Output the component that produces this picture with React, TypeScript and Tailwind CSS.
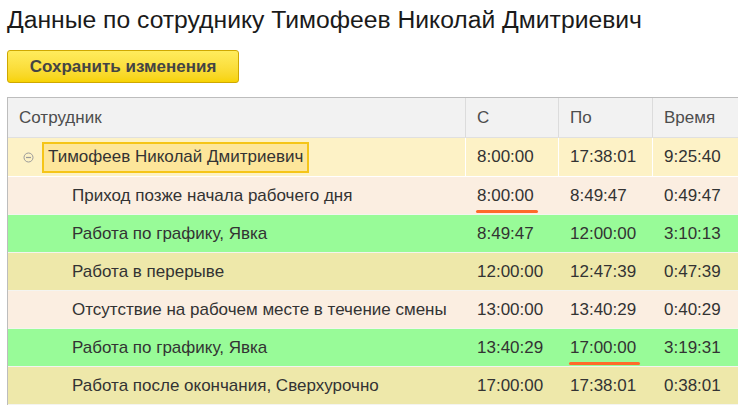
import React from 'react';

type Row = { name: string; from: string; to: string; time: string; bg: string; markFrom?: boolean; markTo?: boolean };

const rows: Row[] = [
  { name: 'Приход позже начала рабочего дня', from: '8:00:00', to: '8:49:47', time: '0:49:47', bg: 'bg-[#fbeee1]', markFrom: true },
  { name: 'Работа по графику, Явка', from: '8:49:47', to: '12:00:00', time: '3:10:13', bg: 'bg-[#98fb98]' },
  { name: 'Работа в перерыве', from: '12:00:00', to: '12:47:39', time: '0:47:39', bg: 'bg-[#eee8aa]' },
  { name: 'Отсутствие на рабочем месте в течение смены', from: '13:00:00', to: '13:40:29', time: '0:40:29', bg: 'bg-[#fbeee1]' },
  { name: 'Работа по графику, Явка', from: '13:40:29', to: '17:00:00', time: '3:19:31', bg: 'bg-[#98fb98]', markTo: true },
  { name: 'Работа после окончания, Сверхурочно', from: '17:00:00', to: '17:38:01', time: '0:38:01', bg: 'bg-[#eee8aa]' },
];

const Marked = ({ text, on }: { text: string; on?: boolean }) => (
  <span className="relative">
    {text}
    {on && <span className="absolute -left-[1px] -right-[4px] -bottom-[5px] h-[3px] rounded-full bg-[#ff6a2a]" />}
  </span>
);

const App = () => {
  return (
    <div className="w-[738px] h-[410px] overflow-hidden bg-white font-['Liberation_Sans',Arial,sans-serif]">
      <h1 className="pl-[7px] pt-[5px] text-[24.7px] leading-[30px] text-[#1a1a1a]">
        Данные по сотруднику Тимофеев Николай Дмитриевич
      </h1>
      <div className="pl-[7px] mt-[15px]">
        <button className="w-[232px] h-[33px] rounded-[3px] border border-[#cfa800] bg-gradient-to-b from-[#ffec5c] to-[#f7d300] text-[17px] font-bold text-[#444]">
          Сохранить изменения
        </button>
      </div>
      <div className="ml-[7px] mt-[14px] w-[740px] border-l border-t border-[#bdbdbd] text-[17px] text-[#333]">
        <div className="grid grid-cols-[458px_93px_94px_1fr] h-[40px] bg-[#f2f2f2] text-[#4d4d4d] border-b border-[#e0e0e0]">
          <div className="flex items-center pl-[11px] border-r border-[#dcdcdc]">Сотрудник</div>
          <div className="flex items-center pl-[11px] border-r border-[#dcdcdc]">С</div>
          <div className="flex items-center pl-[11px] border-r border-[#dcdcdc]">По</div>
          <div className="flex items-center pl-[11px]">Время</div>
        </div>
        <div className="grid grid-cols-[458px_93px_94px_1fr] h-[39px] bg-[#fdf2c6] border-b border-white">
          <div className="flex items-center border-r border-white">
            <svg width="11" height="11" viewBox="0 0 11 11" className="ml-[15px] mr-[8px]">
              <circle cx="5.5" cy="5.5" r="4.5" fill="none" stroke="#9a9a9a" strokeWidth="1" />
              <line x1="3" y1="5.5" x2="8" y2="5.5" stroke="#9a9a9a" strokeWidth="1.2" />
            </svg>
            <span className="h-[31px] flex items-center px-[4px] border-2 border-[#f5c518] bg-[#fde69a]">
              Тимофеев Николай Дмитриевич
            </span>
          </div>
          <div className="flex items-center pl-[11px] border-r border-white">8:00:00</div>
          <div className="flex items-center pl-[11px] border-r border-white">17:38:01</div>
          <div className="flex items-center pl-[11px]">9:25:40</div>
        </div>
        {rows.map((r, i) => (
          <div key={i} className={`grid grid-cols-[458px_93px_94px_1fr] h-[38px] border-b border-[#f4f4f0] ${r.bg}`}>
            <div className="flex items-center pl-[64px]">{r.name}</div>
            <div className="flex items-center pl-[11px]"><Marked text={r.from} on={r.markFrom} /></div>
            <div className="flex items-center pl-[11px]"><Marked text={r.to} on={r.markTo} /></div>
            <div className="flex items-center pl-[11px]">{r.time}</div>
          </div>
        ))}
      </div>
    </div>
  );
};

export default App;
